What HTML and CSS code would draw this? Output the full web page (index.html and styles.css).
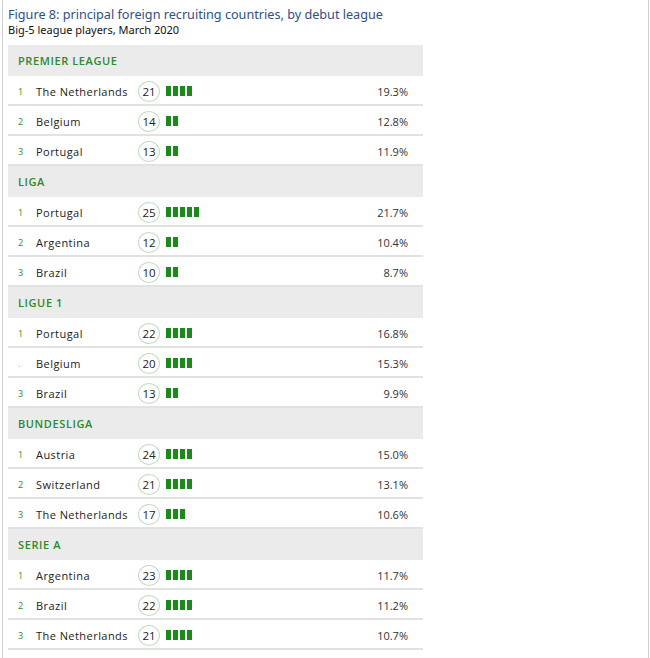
FILE: index.html
```html
<!DOCTYPE html>
<html>
<head>
<meta charset="utf-8">
<link rel="stylesheet" href="styles.css">
</head>
<body>
<div class="frame">
  <div class="title">Figure 8: principal foreign recruiting countries, by debut league</div>
  <div class="subtitle">Big-5 league players, March 2020</div>
  <div class="table">
    <div class="head">PREMIER LEAGUE</div>
    <div class="row"><span class="rank">1</span><span class="name">The Netherlands</span><span class="count">21</span><span class="bars"><i></i><i></i><i></i><i></i></span><span class="pct">19.3%</span></div>
    <div class="row"><span class="rank">2</span><span class="name">Belgium</span><span class="count">14</span><span class="bars"><i></i><i></i></span><span class="pct">12.8%</span></div>
    <div class="row"><span class="rank">3</span><span class="name">Portugal</span><span class="count">13</span><span class="bars"><i></i><i></i></span><span class="pct">11.9%</span></div>

    <div class="head">LIGA</div>
    <div class="row"><span class="rank">1</span><span class="name">Portugal</span><span class="count">25</span><span class="bars"><i></i><i></i><i></i><i></i><i></i></span><span class="pct">21.7%</span></div>
    <div class="row"><span class="rank">2</span><span class="name">Argentina</span><span class="count">12</span><span class="bars"><i></i><i></i></span><span class="pct">10.4%</span></div>
    <div class="row"><span class="rank">3</span><span class="name">Brazil</span><span class="count">10</span><span class="bars"><i></i><i></i></span><span class="pct">8.7%</span></div>

    <div class="head">LIGUE 1</div>
    <div class="row"><span class="rank">1</span><span class="name">Portugal</span><span class="count">22</span><span class="bars"><i></i><i></i><i></i><i></i></span><span class="pct">16.8%</span></div>
    <div class="row"><span class="rank dim">.</span><span class="name">Belgium</span><span class="count">20</span><span class="bars"><i></i><i></i><i></i><i></i></span><span class="pct">15.3%</span></div>
    <div class="row"><span class="rank">3</span><span class="name">Brazil</span><span class="count">13</span><span class="bars"><i></i><i></i></span><span class="pct">9.9%</span></div>

    <div class="head">BUNDESLIGA</div>
    <div class="row"><span class="rank">1</span><span class="name">Austria</span><span class="count">24</span><span class="bars"><i></i><i></i><i></i><i></i></span><span class="pct">15.0%</span></div>
    <div class="row"><span class="rank">2</span><span class="name">Switzerland</span><span class="count">21</span><span class="bars"><i></i><i></i><i></i><i></i></span><span class="pct">13.1%</span></div>
    <div class="row"><span class="rank">3</span><span class="name">The Netherlands</span><span class="count">17</span><span class="bars"><i></i><i></i><i></i></span><span class="pct">10.6%</span></div>

    <div class="head">SERIE A</div>
    <div class="row"><span class="rank">1</span><span class="name">Argentina</span><span class="count">23</span><span class="bars"><i></i><i></i><i></i><i></i></span><span class="pct">11.7%</span></div>
    <div class="row"><span class="rank">2</span><span class="name">Brazil</span><span class="count">22</span><span class="bars"><i></i><i></i><i></i><i></i></span><span class="pct">11.2%</span></div>
    <div class="row"><span class="rank">3</span><span class="name">The Netherlands</span><span class="count">21</span><span class="bars"><i></i><i></i><i></i><i></i></span><span class="pct">10.7%</span></div>
  </div>
</div>
</body>
</html>
```
FILE: styles.css
```css
html, body {
  margin: 0;
  padding: 0;
  background: #fff;
}
.frame {
  margin: 0 1px 0 2px;
  border-left: 1px solid #cfcfcf;
  border-right: 1px solid #cfcfcf;
  height: 658px;
  box-sizing: border-box;
  padding: 6px 0 0 5px;
  font-family: "Open Sans", "Noto Sans", sans-serif;
}
.title {
  font-family: "Noto Sans", sans-serif;
  font-size: 12.65px;
  line-height: 17px;
  color: #2f4f86;
}
.subtitle {
  font-family: "Noto Sans", sans-serif;
  font-size: 11px;
  line-height: 13px;
  color: #111;
}
.table {
  margin-top: 9px;
  width: 415px;
}
.head {
  height: 31px;
  box-sizing: border-box;
  background: #ebebeb;
  color: #2d8a2d;
  font-weight: 600;
  font-size: 11px;
  letter-spacing: 0.6px;
  display: flex;
  align-items: center;
  padding-left: 10px;
}
.row {
  height: 30px;
  box-sizing: border-box;
  border-bottom: 2px solid #e2e2e2;
  padding-top: 2px;
  display: flex;
  align-items: center;
  font-size: 11px;
  color: #222;
}
.rank {
  width: 9px;
  margin-left: 10px;
  font-size: 9px;
  color: #2d8a2d;
}
.rank.dim { color: #999; }
.name {
  width: 102px;
  margin-left: 9px;
  letter-spacing: 0.45px;
}
.count {
  width: 22px;
  height: 21px;
  box-sizing: border-box;
  border: 1.5px solid #c5dcc5;
  border-radius: 50%;
  display: flex;
  align-items: center;
  justify-content: center;
  font-size: 11.5px;
  color: #222;
}
.bars {
  display: flex;
  gap: 2px;
  margin-left: 6px;
  flex: 1;
}
.bars i {
  display: block;
  width: 5px;
  height: 10px;
  background: #1a8a1a;
}
.pct {
  width: 60px;
  text-align: right;
  padding-right: 15px;
  color: #333;
}
```
